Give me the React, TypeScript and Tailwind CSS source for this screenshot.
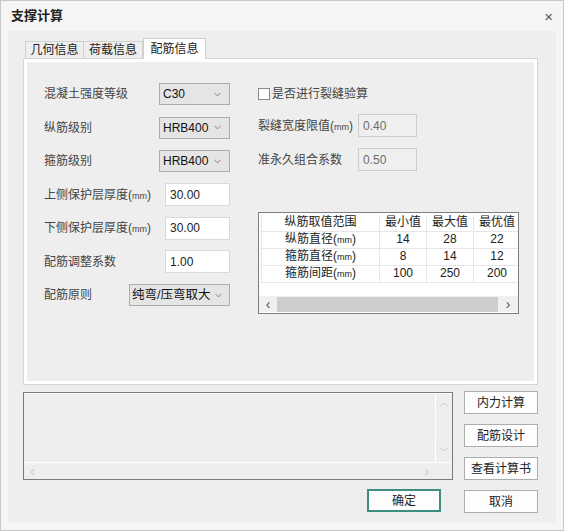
import { ChevronDown } from 'lucide-react'

const selectCls =
  'flex h-[22px] items-center justify-between border border-[#acacac] bg-[#e5e5e5] pl-[3px] pr-[6px] text-[12px] text-[#111] whitespace-nowrap'

function Mm() {
  return (
    <>
      (<span className="text-[9px]">mm</span>)
    </>
  )
}

function Select({ value, w }: { value: string; w: string }) {
  return (
    <div className={`${selectCls} ${w}`}>
      <span>{value}</span>
      <ChevronDown size={11} strokeWidth={1.3} className="text-[#444]" />
    </div>
  )
}

function Input({ value, w, disabled }: { value: string; w: string; disabled?: boolean }) {
  return (
    <div
      className={`flex h-[23px] items-center border px-[4px] text-[12px] ${w} ${
        disabled ? 'border-[#cccccc] bg-[#efefef] text-[#6d6d6d]' : 'border-[#d9d9d9] bg-white text-[#222]'
      }`}
    >
      {value}
    </div>
  )
}

function Btn({ children, primary }: { children: string; primary?: boolean }) {
  return (
    <button
      className={`flex h-[23px] w-[74px] items-center justify-center bg-[#fdfdfd] text-[12px] text-[#222] ${
        primary ? 'border-2 border-[#3c8f80]' : 'border border-[#adadad]'
      }`}
    >
      {children}
    </button>
  )
}

const rows = [
  ['纵筋直径', '14', '28', '22'],
  ['箍筋直径', '8', '14', '12'],
  ['箍筋间距', '100', '250', '200'],
]

export default function App() {
  return (
    <div className="flex h-[531px] w-[564px] flex-col border border-[#c8c8c8] bg-[#f5f5f5] font-['Liberation_Sans','Noto_Sans_CJK_SC',sans-serif] text-[#333]">
      {/* title bar */}
      <div className="flex h-[30px] shrink-0 items-center justify-between pl-[10px] pr-[10px]">
        <span className="text-[13px] font-bold text-[#222]">支撑计算</span>
        <span className="text-[15px] leading-none text-[#555]">×</span>
      </div>

      {/* body */}
      <div className="mx-[7px] flex h-[491px] flex-col bg-[#eeeeee] pl-[15px] pr-[18px] pt-[7px]">
        {/* tabs */}
        <div className="flex h-[20px] items-end pl-[2px] text-[12px] text-[#222]">
          <div className="flex h-[17px] w-[59px] items-center justify-center border border-b-0 border-[#d0d0d0]">几何信息</div>
          <div className="flex h-[17px] w-[59px] items-center justify-center border border-b-0 border-l-0 border-[#d0d0d0]">荷载信息</div>
          <div className="relative top-[1px] flex h-[21px] w-[63px] items-center justify-center border border-b-0 border-[#d0d0d0] bg-white">配筋信息</div>
        </div>

        {/* panel */}
        <div className="h-[327px] border border-[#d5d5d5] bg-white p-[3px]">
          <div className="flex h-full bg-[#eeeeee] pl-[17px] pt-[21px] text-[12px] text-[#444]">
            {/* left column */}
            <div className="flex w-[186px] flex-col gap-[11.5px]">
              <div className="flex h-[22px] items-center justify-between">
                <span>混凝土强度等级</span>
                <Select value="C30" w="w-[71px]" />
              </div>
              <div className="flex h-[22px] items-center justify-between">
                <span>纵筋级别</span>
                <Select value="HRB400" w="w-[71px]" />
              </div>
              <div className="flex h-[22px] items-center justify-between">
                <span>箍筋级别</span>
                <Select value="HRB400" w="w-[71px]" />
              </div>
              <div className="flex h-[22px] items-center justify-between">
                <span>上侧保护层厚度<Mm /></span>
                <Input value="30.00" w="w-[65px]" />
              </div>
              <div className="flex h-[22px] items-center justify-between">
                <span>下侧保护层厚度<Mm /></span>
                <Input value="30.00" w="w-[65px]" />
              </div>
              <div className="flex h-[22px] items-center justify-between">
                <span>配筋调整系数</span>
                <Input value="1.00" w="w-[65px]" />
              </div>
              <div className="flex h-[22px] items-center justify-between">
                <span>配筋原则</span>
                <div className={`${selectCls} w-[101px] !pl-[2px] !pr-[5px]`}>
                  <span className="text-[12.5px]">纯弯/压弯取大</span>
                  <ChevronDown size={11} strokeWidth={1.3} className="text-[#444]" />
                </div>
              </div>
            </div>

            {/* right column */}
            <div className="ml-[28px] flex flex-col">
              <div className="flex h-[22px] items-center gap-[2px]">
                <span className="h-[12px] w-[12px] border border-[#8a8a8a] bg-white" />
                <span>是否进行裂缝验算</span>
              </div>
              <div className="mt-[9px] flex h-[23px] items-center">
                <span className="w-[100px]">裂缝宽度限值<Mm /></span>
                <Input value="0.40" w="w-[59px]" disabled />
              </div>
              <div className="mt-[11px] flex h-[23px] items-center">
                <span className="w-[100px]">准永久组合系数</span>
                <Input value="0.50" w="w-[59px]" disabled />
              </div>

              {/* range table */}
              <div className="mt-[41px] flex h-[102px] w-[261px] flex-col border border-[#7f7f7f] bg-white">
                <div className="overflow-hidden pl-[2px] pt-[2px]">
                  <table className="w-[300px] table-fixed border-collapse text-center text-[12px] leading-[15px] text-[#222]">
                    <colgroup>
                      <col className="w-[118px]" />
                      <col className="w-[47px]" />
                      <col className="w-[47px]" />
                      <col className="w-[47px]" />
                      <col className="w-[41px]" />
                    </colgroup>
                    <tbody>
                      <tr className="h-[16px]">
                        <td className="border-l border-r border-b border-[#e6e6e6]">纵筋取值范围</td>
                        <td className="border-r border-b border-[#e6e6e6]">最小值</td>
                        <td className="border-r border-b border-[#e6e6e6]">最大值</td>
                        <td className="border-r border-b border-[#e6e6e6]">最优值</td>
                        <td />
                      </tr>
                      {rows.map((r) => (
                        <tr key={r[0]} className="h-[16px]">
                          <td className="border-l border-r border-b border-[#e6e6e6]">{r[0]}<Mm /></td>
                          <td className="border-r border-b border-[#e6e6e6]">{r[1]}</td>
                          <td className="border-r border-b border-[#e6e6e6]">{r[2]}</td>
                          <td className="border-r border-b border-[#e6e6e6]">{r[3]}</td>
                          <td />
                        </tr>
                      ))}
                    </tbody>
                  </table>
                </div>
                <div className="mt-auto mb-[1px] flex h-[16px] items-center bg-[#f0f0f0] text-[#555]">
                  <span className="flex w-[18px] justify-center text-[14px] leading-none">‹</span>
                  <div className="h-[15px] flex-1 bg-[#cdcdcd]" />
                  <span className="flex w-[20px] justify-center text-[14px] leading-none">›</span>
                </div>
              </div>
            </div>
          </div>
        </div>

        {/* bottom area */}
        <div className="mt-[6px] flex gap-[11px]">
          <div className="flex w-[431px] flex-col">
            <div className="mt-[1px] flex h-[88px] flex-col border border-[#7a7a7a] bg-[#eeeeee]">
              <div className="flex flex-1">
                <div className="flex-1 border-t border-white" />
                <div className="flex w-[17px] flex-col items-center justify-between border-l border-t border-white py-[4px] text-[#c8c8c8]">
                  <span className="text-[10px] leading-none">︿</span>
                  <span className="text-[10px] leading-none">﹀</span>
                </div>
              </div>
              <div className="flex h-[17px] items-center justify-between border-t border-white px-[6px] text-[14px] text-[#c8c8c8]">
                <span>‹</span>
                <span className="mr-[17px]">›</span>
              </div>
            </div>
            <div className="mt-[9px] flex justify-end pr-[12px]">
              <Btn primary>确定</Btn>
            </div>
          </div>
          <div className="flex flex-col gap-[10px]">
            <Btn>内力计算</Btn>
            <Btn>配筋设计</Btn>
            <Btn>查看计算书</Btn>
            <Btn>取消</Btn>
          </div>
        </div>
      </div>
    </div>
  )
}
